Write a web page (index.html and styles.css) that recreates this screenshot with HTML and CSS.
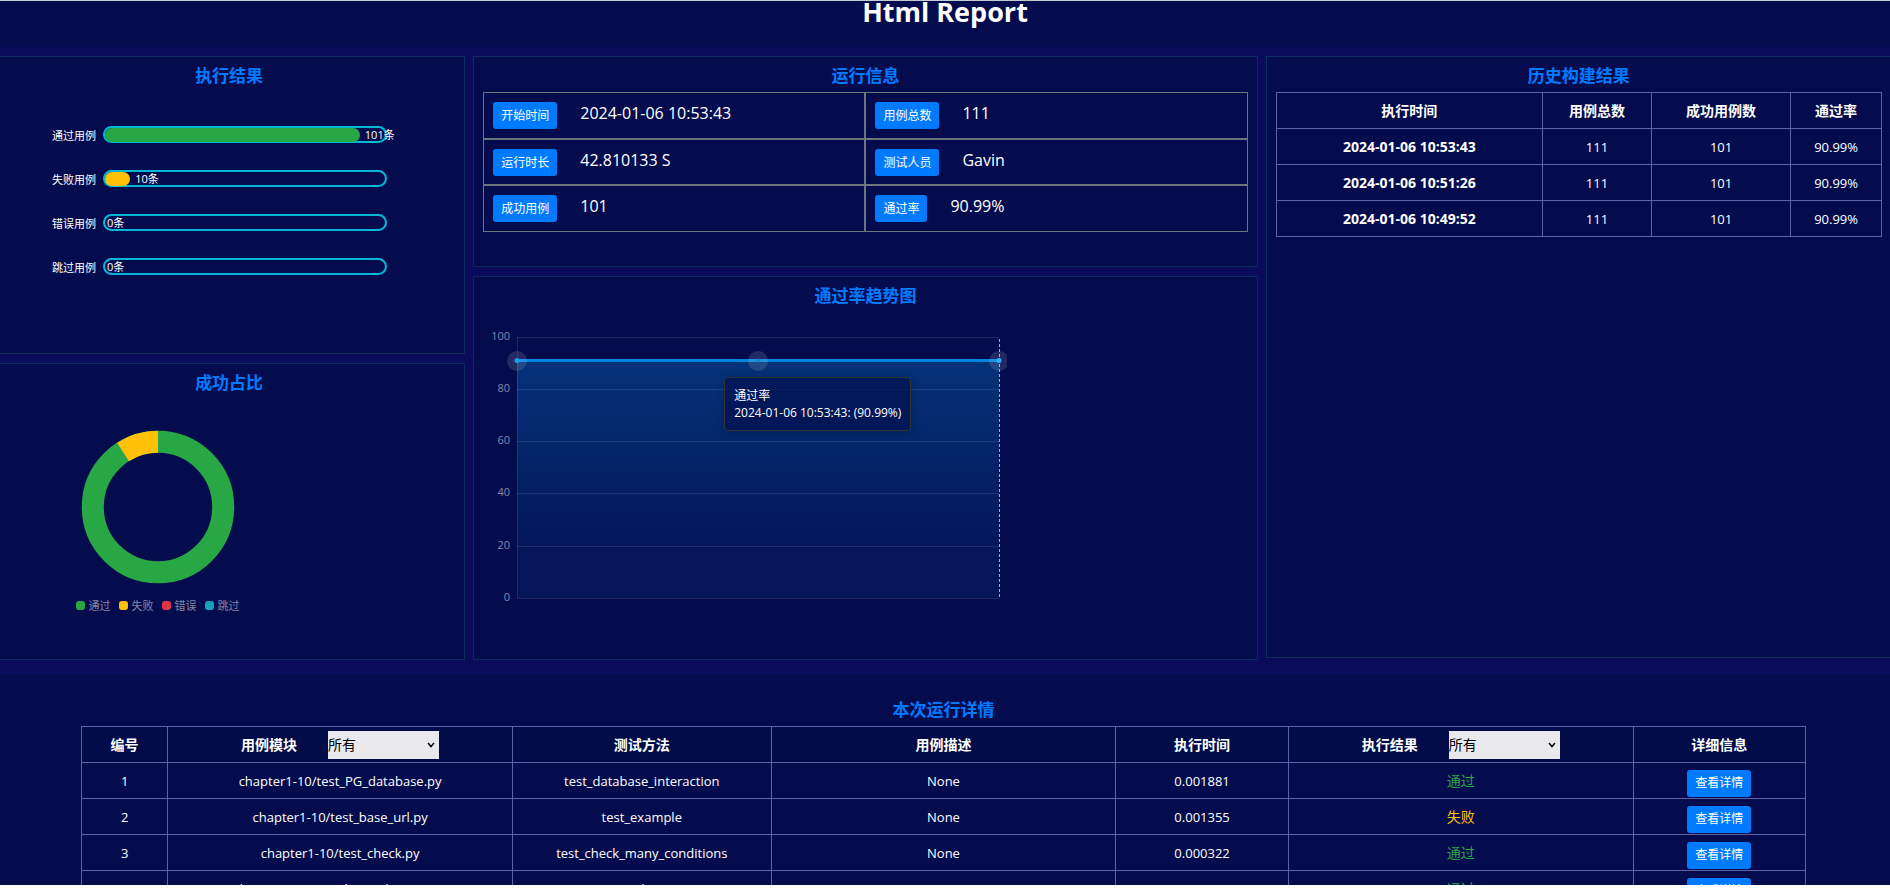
FILE: index.html
```html
<!DOCTYPE html>
<html lang="zh-CN">
<head>
<meta charset="utf-8">
<title>Html Report</title>
<link rel="stylesheet" href="styles.css">
</head>
<body>
<div class="page">
  <header class="header"><h1 class="header-title">Html Report</h1></header>

  <main class="board">
    <div class="column">
      <section class="panel">
        <h2 class="panel-title">执行结果</h2>
        <div class="bars">
          <div class="bar-row"><span class="bar-name">通过用例</span><div class="bar-track"><div class="bar-fill pass" style="width: 91%"></div><span class="bar-value">101条</span></div></div>
          <div class="bar-row"><span class="bar-name">失败用例</span><div class="bar-track"><div class="bar-fill fail" style="width: 9%"></div><span class="bar-value">10条</span></div></div>
          <div class="bar-row"><span class="bar-name">错误用例</span><div class="bar-track"><span class="bar-value zero">0条</span></div></div>
          <div class="bar-row"><span class="bar-name">跳过用例</span><div class="bar-track"><span class="bar-value zero">0条</span></div></div>
        </div>
      </section>
      <section class="panel">
        <h2 class="panel-title">成功占比</h2>
        <div class="ratio">
          <svg class="donut" width="154" height="154" viewBox="-77 -77 154 154">
            <circle r="65.2" fill="none" stroke="#28a745" stroke-width="22"/>
            <path d="M-34.94 -55.05A65.2 65.2 0 0 1 0 -65.2" fill="none" stroke="#ffc107" stroke-width="22"/>
          </svg>
          <ul class="legend">
            <li class="legend-item"><i class="swatch pass"></i>通过</li>
            <li class="legend-item"><i class="swatch fail"></i>失败</li>
            <li class="legend-item"><i class="swatch error"></i>错误</li>
            <li class="legend-item"><i class="swatch skip"></i>跳过</li>
          </ul>
        </div>
      </section>
    </div>

    <div class="column">
      <section class="panel panel-info">
        <h2 class="panel-title">运行信息</h2>
        <div class="info">
          <div class="info-cell"><button class="btn" type="button">开始时间</button><span class="info-value">2024-01-06 10:53:43</span></div>
          <div class="info-cell"><button class="btn" type="button">用例总数</button><span class="info-value">111</span></div>
          <div class="info-cell"><button class="btn" type="button">运行时长</button><span class="info-value">42.810133 S</span></div>
          <div class="info-cell"><button class="btn" type="button">测试人员</button><span class="info-value">Gavin</span></div>
          <div class="info-cell"><button class="btn" type="button">成功用例</button><span class="info-value">101</span></div>
          <div class="info-cell"><button class="btn" type="button">通过率</button><span class="info-value">90.99%</span></div>
        </div>
      </section>
      <section class="panel panel-trend">
        <h2 class="panel-title">通过率趋势图</h2>
        <div class="trend">
          <svg class="trend-chart" width="524" height="292" viewBox="0 0 524 292">
            <defs>
              <linearGradient id="area" x1="0" y1="0" x2="0" y2="1">
                <stop offset="0" stop-color="#0184d5" stop-opacity="0.32"/>
                <stop offset="0.8" stop-color="#0184d5" stop-opacity="0.08"/>
                <stop offset="1" stop-color="#0184d5" stop-opacity="0.08"/>
              </linearGradient>
            </defs>
            <rect x="34" y="45" width="482" height="238" fill="url(#area)"/>
            <g stroke="#ffffff" stroke-opacity="0.1">
              <path d="M34 22.5H516M34 74.5H516M34 126.5H516M34 178.5H516M34 231.5H516M34 283.5H516M34.5 22V283"/>
            </g>
            <g class="axis-text" text-anchor="end">
              <text x="27" y="25">100</text>
              <text x="27" y="77">80</text>
              <text x="27" y="129">60</text>
              <text x="27" y="181">40</text>
              <text x="27" y="234">20</text>
              <text x="27" y="286">0</text>
            </g>
            <path d="M516.500 24V283" stroke="#ffffff" stroke-opacity="0.65" stroke-dasharray="3 2"/>
            <path d="M34 45.500H516" stroke="#0088e0" stroke-width="3"/>
            <g fill="#dddddd" fill-opacity="0.14">
              <circle cx="34" cy="46" r="10"/>
              <circle cx="275" cy="46" r="10"/>
              <circle cx="516" cy="46" r="10"/>
            </g>
            <circle cx="34" cy="45.500" r="2.500" fill="#1a9fe8"/>
            <circle cx="275" cy="45.500" r="2" fill="#1784c4"/>
            <circle cx="516" cy="45.500" r="2.500" fill="#30aef0"/>
          </svg>
          <div class="tooltip">通过率<br>2024-01-06 10:53:43: (90.99%)</div>
        </div>
      </section>
    </div>

    <section class="panel panel-history">
      <h2 class="panel-title">历史构建结果</h2>
      <table class="grid-table history">
        <colgroup><col class="w44"><col class="w18"><col class="w23"><col class="w15"></colgroup>
        <thead><tr><th>执行时间</th><th>用例总数</th><th>成功用例数</th><th>通过率</th></tr></thead>
        <tbody>
          <tr><th>2024-01-06 10:53:43</th><td>111</td><td>101</td><td>90.99%</td></tr>
          <tr><th>2024-01-06 10:51:26</th><td>111</td><td>101</td><td>90.99%</td></tr>
          <tr><th>2024-01-06 10:49:52</th><td>111</td><td>101</td><td>90.99%</td></tr>
        </tbody>
      </table>
    </section>
  </main>

  <section class="details">
    <h2 class="panel-title">本次运行详情</h2>
    <table class="grid-table detail-table">
      <colgroup><col class="w5"><col class="w20"><col class="w15"><col class="w20"><col class="w10"><col class="w20"><col class="w10"></colgroup>
      <thead>
        <tr>
          <th>编号</th>
          <th><div class="filter"><label for="module">用例模块</label><select class="select" id="module"><option>所有</option></select></div></th>
          <th>测试方法</th>
          <th>用例描述</th>
          <th>执行时间</th>
          <th><div class="filter"><label for="result">执行结果</label><select class="select" id="result"><option>所有</option></select></div></th>
          <th>详细信息</th>
        </tr>
      </thead>
      <tbody>
        <tr><td>1</td><td>chapter1-10/test_PG_database.py</td><td>test_database_interaction</td><td>None</td><td>0.001881</td><td class="result ok">通过</td><td><button class="btn btn-row" type="button">查看详情</button></td></tr>
        <tr><td>2</td><td>chapter1-10/test_base_url.py</td><td>test_example</td><td>None</td><td>0.001355</td><td class="result bad">失败</td><td><button class="btn btn-row" type="button">查看详情</button></td></tr>
        <tr><td>3</td><td>chapter1-10/test_check.py</td><td>test_check_many_conditions</td><td>None</td><td>0.000322</td><td class="result ok">通过</td><td><button class="btn btn-row" type="button">查看详情</button></td></tr>
        <tr><td>4</td><td>chapter1-10/test_demo_demo_1.py</td><td>test_login</td><td>None</td><td>0.000354</td><td class="result ok">通过</td><td><button class="btn btn-row" type="button">查看详情</button></td></tr>
      </tbody>
    </table>
  </section>
</div>
</body>
</html>
```

FILE: styles.css
```css
* { box-sizing: border-box; }

body {
  margin: 0;
  background: #ffffff;
  color: #ffffff;
  font-family: "Open Sans", "Noto Sans CJK SC", sans-serif;
  font-size: 14px;
}

.page {
  height: calc(100vh - 5px);
  overflow: hidden;
  background: #050c4e;
  border-top: 1px solid #c3ccd3;
}

.header { height: 46px; }

.header-title {
  margin: 0;
  font-size: 27px;
  line-height: 22px;
  text-align: center;
}

/* three panel columns, bleeding over the left and right edges */
.board {
  display: grid;
  grid-template-columns: 472fr 784fr 626fr;
  gap: 8px;
  margin: 0 -2px 0 -7px;
  padding: 9px 0 14px;
  background: #0a0b5a;
}

.column {
  display: flex;
  flex-direction: column;
  gap: 9px;
}

.panel {
  flex: 1;
  min-height: 297px;
  padding: 4px 9px;
  background: #050c4e;
  border: 1px solid #092c5c;
}

.panel-info { flex: none; min-height: 211px; }
.panel-trend { min-height: 384px; }
.panel-history { margin-bottom: 2px; }

.panel-title {
  margin: 0 0 1px;
  color: #007bff;
  font-size: 17px;
  line-height: 30px;
  text-align: center;
}

.bars {
  display: flex;
  flex-direction: column;
  gap: 27px;
  padding: 34px 0 0 49px;
}

.bar-row {
  display: flex;
  align-items: center;
  gap: 7px;
  height: 17px;
  font-size: 11px;
  white-space: nowrap;
}

.bar-name { width: 44px; text-align: right; }

.bar-track {
  display: flex;
  align-items: center;
  width: 284px;
  height: 17px;
  border: 2px solid #00b9d6;
  border-radius: 9px;
}

.bar-fill { flex: none; height: 14px; border-radius: 7px; }
.bar-value { margin-left: 5px; line-height: 13px; }
.zero { margin-left: 2px; }

.pass { background: #28a745; }
.fail { background: #ffc107; }
.error { background: #dc3545; }
.skip { background: #17a2b8; }

.ratio {
  display: flex;
  flex-direction: column;
  align-items: center;
  gap: 14px;
  width: 309px;
  padding-top: 31px;
}

.legend {
  display: flex;
  gap: 8px;
  margin: 0;
  padding: 0;
  list-style: none;
  color: #8587a8;
  font-size: 11px;
  line-height: 16px;
}

.legend-item { display: flex; align-items: center; gap: 4px; }
.swatch { width: 9px; height: 9px; border-radius: 3px; }

.info {
  display: grid;
  grid-template-columns: 1fr 1fr;
  border: 1px solid #6c757d;
}

.info-cell {
  display: flex;
  height: 46px;
  gap: 23px;
  padding: 9px;
  border: 1px solid #6c757d;
}

.info-cell:nth-child(odd) { border-left: 0; }
.info-cell:nth-child(even) { border-right: 0; }
.info-cell:nth-child(-n+2) { border-top: 0; }
.info-cell:nth-last-child(-n+2) { border-bottom: 0; }

.info-value { font-size: 16px; line-height: 22px; }

.btn {
  height: 27px;
  padding: 0 8px;
  border: 0;
  border-radius: 3px;
  background: #007bff;
  color: #ffffff;
  font-family: inherit;
  font-size: 12px;
  line-height: 26px;
}

.trend { position: relative; width: 524px; padding-top: 3px; }
.trend-chart { display: block; }

.axis-text {
  fill: #8587a8;
  font-family: "Open Sans", sans-serif;
  font-size: 11px;
}

.tooltip {
  position: absolute;
  left: 241px;
  top: 65px;
  padding: 9px;
  border: 1px solid #333333;
  border-radius: 4px;
  background: rgba(3, 16, 78, 0.7);
  box-shadow: 1px 2px 10px rgba(0, 0, 0, 0.2);
  font-size: 12px;
  line-height: 17px;
  white-space: nowrap;
}

.grid-table {
  width: 100%;
  border-collapse: collapse;
  table-layout: fixed;
  text-align: center;
}

.grid-table th,
.grid-table td {
  height: 36px;
  padding: 0;
  border: 1px solid #5a64a6;
  font-size: 14px;
  line-height: 20px;
}

.grid-table td { font-size: 13px; }
.grid-table .result { font-size: 14px; }
.ok { color: #28a745; }
.bad { color: #ffc107; }

.w5 { width: 5%; }
.w10 { width: 10%; }
.w15 { width: 15%; }
.w18 { width: 18%; }
.w20 { width: 20%; }
.w23 { width: 23%; }
.w44 { width: 44%; }

.details { padding: 21px 84px 0 81px; }
.detail-table thead th { background: #020c48; }

.filter {
  display: flex;
  align-items: center;
  justify-content: center;
  gap: 31px;
}

.select {
  width: 111px;
  height: 28px;
  padding: 0;
  border: 0;
  border-radius: 0;
  appearance: none;
  background: #e9e9ed url("data:image/svg+xml,%3Csvg xmlns='http://www.w3.org/2000/svg' width='8' height='6' fill='none' stroke='%23000' stroke-width='1.500'%3E%3Cpath d='M1 1L4 4.500L7 1'/%3E%3C/svg%3E") no-repeat right 4px center;
  color: #000000;
  font-family: inherit;
  font-size: 14px;
}

.btn-row { display: block; margin: 5px auto 0; }
```
